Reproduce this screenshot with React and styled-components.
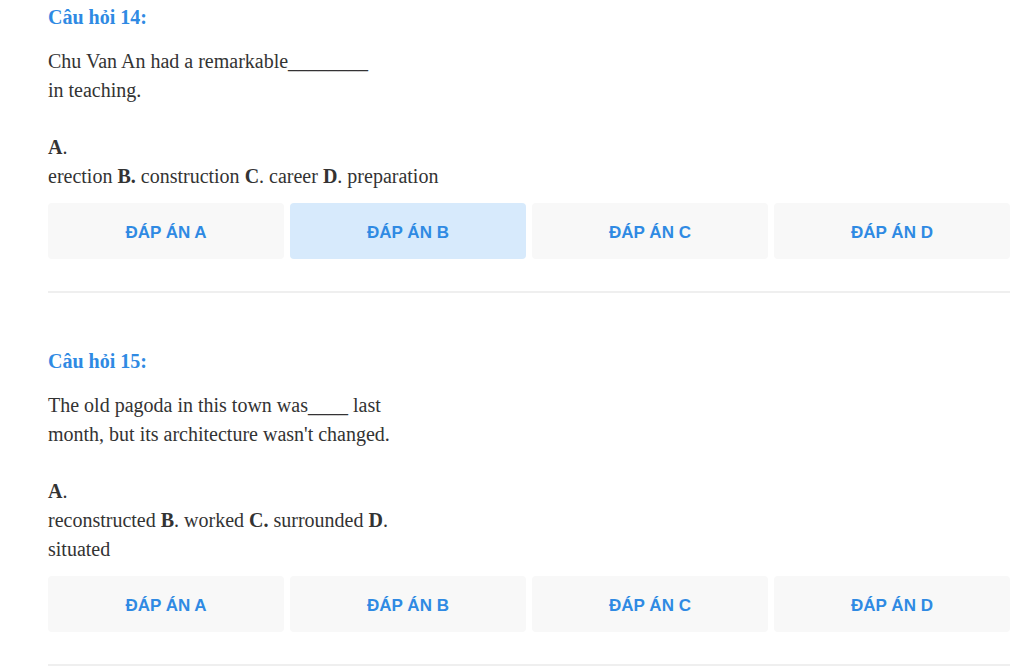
import React from "react";
import styled, { createGlobalStyle } from "styled-components";

const Global = createGlobalStyle`
  html, body { margin: 0; padding: 0; background: #fff; }
  body { font-family: "Liberation Serif", "Times New Roman", serif; color: #333; }
`;

const Page = styled.div`
  padding: 3px 14px 0 48px;
  width: 962px;
`;

const Section = styled.section`
  padding-bottom: 32px;
  border-bottom: 2px solid #efefef;
  & + & { margin-top: 54px; }
`;

const Title = styled.div`
  font-weight: bold;
  font-size: 20px;
  line-height: 29px;
  color: #2f8ae3;
  margin-bottom: 15px;
`;

const Text = styled.p`
  margin: 0;
  font-size: 20px;
  line-height: 29px;
  color: #333;
`;

const Options = styled(Text)`
  margin-top: 28px;
`;

const Buttons = styled.div`
  display: grid;
  grid-template-columns: repeat(4, 1fr);
  gap: 6px;
  margin-top: 12px;
`;

const AnswerButton = styled.button`
  height: 56px;
  border: none;
  border-radius: 4px;
  background: ${(p) => (p.$active ? "#d7eafc" : "#f8f8f8")};
  color: #2f8ae3;
  font-family: "Liberation Sans", Arial, sans-serif;
  font-weight: bold;
  font-size: 17px;
  text-transform: uppercase;
  cursor: pointer;
  padding: 3px 0 0;
`;

const letters = ["A", "B", "C", "D"];

function Question({ num, text, options, active }) {
  return (
    <Section>
      <Title>Câu hỏi {num}:</Title>
      <Text>{text}</Text>
      <Options>{options}</Options>
      <Buttons>
        {letters.map((l) => (
          <AnswerButton key={l} $active={active === l}>
            Đáp án {l}
          </AnswerButton>
        ))}
      </Buttons>
    </Section>
  );
}

export default function App() {
  return (
    <>
      <Global />
      <Page>
        <Question
          num={14}
          active="B"
          text={
            <>
              Chu Van An had a remarkable________
              <br />
              in teaching.
            </>
          }
          options={
            <>
              <b>A</b>.
              <br />
              erection <b>B.</b> construction <b>C</b>. career <b>D</b>. preparation
            </>
          }
        />
        <Question
          num={15}
          text={
            <>
              The old pagoda in this town was____ last
              <br />
              month, but its architecture wasn't changed.
            </>
          }
          options={
            <>
              <b>A</b>.
              <br />
              reconstructed <b>B</b>. worked <b>C.</b> surrounded <b>D</b>.
              <br />
              situated
            </>
          }
        />
      </Page>
    </>
  );
}
